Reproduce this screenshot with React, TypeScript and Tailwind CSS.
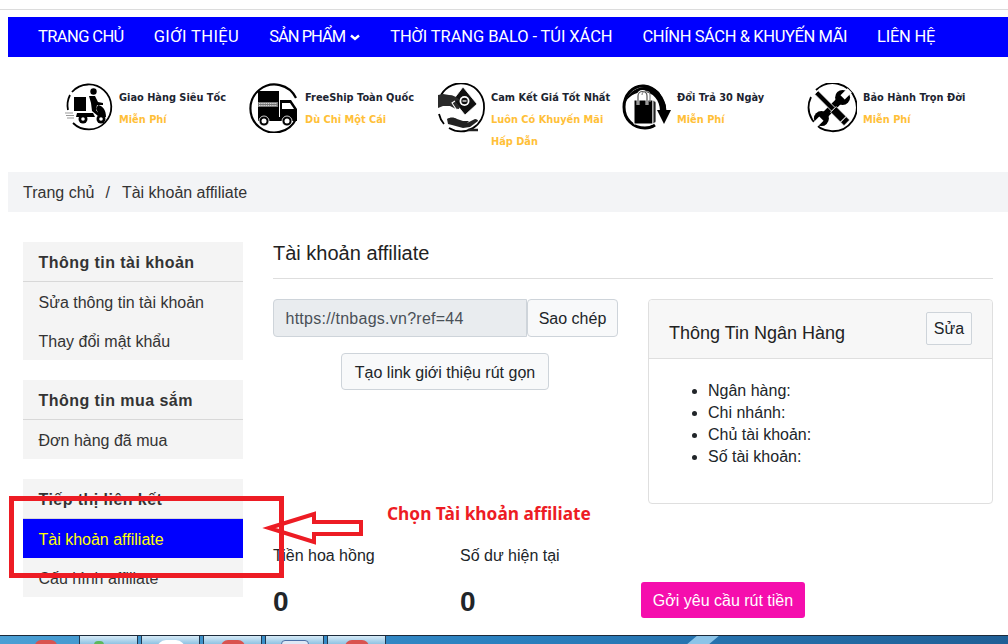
import React from 'react';

const body = '"Liberation Sans", "Noto Sans", sans-serif';

const ScooterIcon = () => (
  <svg viewBox="0 0 48 48" className="w-[48px] h-[48px] shrink-0">
    <path d="M7 9A22.500 22.500 0 1 1 8 40" fill="none" stroke="#000" strokeWidth="1.800" />
    <path d="M5 12A22.500 22.500 0 0 0 3 27" fill="none" stroke="#000" strokeWidth="1.800" />
    <path d="M0 30h8M1 32.500h8M2 35h7" stroke="#999" strokeWidth="1" />
    <rect x="9" y="14" width="12" height="14" fill="#000" />
    <circle cx="28.500" cy="8.500" r="3.200" fill="#000" />
    <path d="M24 13l6 0 3 6 5 1 0 2-6 0-1 5 4 5-2 1-6-5-1-8z" fill="#000" />
    <path d="M33 22c5 1 8 5 8 12l-7 1c0-4-2-8-3-9z" fill="#000" />
    <path d="M12 30h16l2 4H11z" fill="#000" />
    <circle cx="18" cy="36" r="4.500" fill="#000" />
    <circle cx="18" cy="36" r="1.800" fill="#fff" />
    <circle cx="36" cy="36" r="4.500" fill="#000" />
    <circle cx="36" cy="36" r="1.800" fill="#fff" />
  </svg>
);

const TruckIcon = () => (
  <svg viewBox="0 0 50 50" className="w-[50px] h-[50px] shrink-0">
    <path d="M47 15A24 24 0 1 0 47 36" fill="none" stroke="#000" strokeWidth="2.200" />
    <rect x="9" y="8" width="20" height="27" fill="#000" />
    <rect x="29" y="8" width="1" height="27" fill="#000" />
    <rect x="9" y="19" width="20" height="5" fill="#777" />
    <path d="M10 20.500h18M10 22.500h18" stroke="#fff" strokeWidth="0.700" strokeDasharray="1.500 0.700" />
    <path d="M31 17h11l6 9v11H31z" fill="#000" />
    <path d="M33 20h8l4 6H33z" fill="#fff" />
    <rect x="9" y="34" width="39" height="4" fill="#000" />
    <circle cx="15" cy="38" r="5" fill="#000" stroke="#fff" strokeWidth="0.800" />
    <circle cx="15" cy="38" r="2.500" fill="#fff" />
    <circle cx="38" cy="38" r="5" fill="#000" stroke="#fff" strokeWidth="0.800" />
    <circle cx="38" cy="38" r="2.500" fill="#fff" />
  </svg>
);

const MoneyIcon = () => (
  <svg viewBox="0 0 50 50" className="w-[50px] h-[50px] shrink-0">
    <path d="M6 12A23 23 0 0 1 49 24A23 23 0 0 1 14 45M4 31A23 23 0 0 0 9 41" fill="none" stroke="#000" strokeWidth="1.800" />
    <path d="M28 4L42 21 30 32 18 17z" fill="#111" stroke="#fff" strokeWidth="0.800" />
    <circle cx="29.500" cy="18" r="5" fill="#fff" />
    <circle cx="29.500" cy="18" r="3.200" fill="#111" />
    <path d="M27.500 18h4" stroke="#fff" strokeWidth="1.200" />
    <path d="M3 12L8 11l6 1c4 0 8 2 11 5l-5 1 5 6-2 3-8-4H8l-5 2z" fill="#2a2a2a" />
    <path d="M20 18l-3 2 4 6 4 1" fill="none" stroke="#fff" strokeWidth="1.100" />
    <path d="M12 36c3-2 7-2 10 0l6 2h6l-2 2 8-4c2 0 3 1 3 2l-8 6-7 1-11-3-4-1z" fill="#222" />
    <path d="M33 47h10" stroke="#222" strokeWidth="2.500" />
  </svg>
);

const BagIcon = () => (
  <svg viewBox="0 0 50 48" className="w-[50px] h-[48px] shrink-0">
    <path d="M43 28C42 14 33 4 22 3 10 2 2 13 2 24c0 12 9 21 21 21 4 0 7-1 10-3" fill="none" stroke="#000" strokeWidth="3" />
    <path d="M3 20A21 21 0 0 1 37 9l6 11c1 2 1 5 1 8h-6C38 17 31 9 21 9 13 9 6 14 3 20z" fill="#000" />
    <path d="M35 27h14l-7 14z" fill="#000" />
    <path d="M12 17h19v24H12z" fill="#000" stroke="#fff" strokeWidth="1" />
    <path d="M31 17l3 2v20l-3 2z" fill="#222" stroke="#fff" strokeWidth="0.800" />
    <path d="M16 22V13c0-6 9-6 9 0v9" fill="none" stroke="#fff" strokeWidth="2.800" />
    <path d="M16 22V13c0-6 9-6 9 0v9" fill="none" stroke="#555" strokeWidth="1.200" />
    <path d="M20 12c0-5 8-5 8 0v7" fill="none" stroke="#888" strokeWidth="1.200" />
  </svg>
);

const ToolsIcon = () => (
  <svg viewBox="0 0 50 50" className="w-[50px] h-[50px] shrink-0">
    <path d="M9 7A24 24 0 1 1 4 14" fill="none" stroke="#000" strokeWidth="1.800" />
    <g transform="rotate(45 25 25)">
      <rect x="21.500" y="11" width="7" height="28" fill="#000" />
      <circle cx="25" cy="10" r="7.500" fill="#000" />
      <rect x="22" y="0" width="6" height="10" fill="#fff" />
      <circle cx="25" cy="40" r="7.500" fill="#000" />
      <rect x="22" y="40" width="6" height="10" fill="#fff" />
    </g>
    <g transform="rotate(-45 25 25)">
      <rect x="22.500" y="3" width="5" height="24" fill="#000" stroke="#fff" strokeWidth="0.800" />
      <rect x="21" y="27" width="8" height="19" fill="#000" stroke="#fff" strokeWidth="0.800" />
      <path d="M21 41h8" stroke="#fff" strokeWidth="1" />
    </g>
  </svg>
);

const benefits = [
  { icon: <ScooterIcon />, title: 'Giao Hàng Siêu Tốc', sub: ['Miễn Phí'], ml: 'ml-[1px]' },
  { icon: <TruckIcon />, title: 'FreeShip Toàn Quốc', sub: ['Dù Chỉ Một Cái'], ml: '-ml-[1px]' },
  { icon: <MoneyIcon />, title: 'Cam Kết Giá Tốt Nhất', sub: ['Luôn Có Khuyến Mãi', 'Hấp Dẫn'], ml: '-ml-[1px]' },
  { icon: <BagIcon />, title: 'Đổi Trả 30 Ngày', sub: ['Miễn Phí'], ml: 'ml-0' },
  { icon: <ToolsIcon />, title: 'Bảo Hành Trọn Đời', sub: ['Miễn Phí'], ml: '-ml-[1px]' },
];

const navItems = [
  { label: 'TRANG CHỦ', track: 'tracking-[-0.6px]' },
  { label: 'GIỚI THIỆU', track: 'tracking-[0.4px]' },
  { label: 'SẢN PHẨM', track: 'tracking-[-1px]' },
  { label: 'THỜI TRANG BALO - TÚI XÁCH', track: 'tracking-[-0.1px]' },
  { label: 'CHÍNH SÁCH & KHUYẾN MÃI', track: 'tracking-[-0.4px]' },
  { label: 'LIÊN HỆ', track: 'tracking-[-0.25px]' },
];

const sideGroups = [
  { title: 'Thông tin tài khoản', items: ['Sửa thông tin tài khoản', 'Thay đổi mật khẩu'] },
  { title: 'Thông tin mua sắm', items: ['Đơn hàng đã mua'] },
  { title: 'Tiếp thị liên kết', items: ['Tài khoản affiliate', 'Cấu hình affiliate'] },
];

const taskButtons = [
  <div className="w-[10px] h-[4px] bg-[#5cb85c] rounded-t-full mx-auto mt-[5px] -translate-x-[10px]" />,
  <div className="w-[28px] h-[9px] bg-white rounded-t-full mx-auto mt-[4px]" />,
  <div className="w-[24px] h-[7px] bg-[#d9534f] rounded-t-full mx-auto mt-[4px]" />,
  <div className="w-[28px] h-[8px] bg-[#dfe8f5] border border-[#4a6fa5] rounded-t-sm mx-auto mt-[4px]" />,
  <div className="w-[24px] h-[7px] bg-[#d9534f] rounded-t-full mx-auto mt-[4px]" />,
];

export default function App() {
  return (
    <div className="relative w-[1008px] h-[644px] overflow-hidden bg-white flex flex-col text-[#212529]" style={{ fontFamily: body }}>
      <div className="h-[10px] shrink-0 border-b border-[#dcdcdc]" />

      <div className="ml-[8px] mt-[7px] h-[40px] shrink-0 bg-[#0000ff] flex items-center pl-[15px] text-white text-[16.500px]" style={{ fontFamily: 'Roboto, sans-serif' }}>
        {navItems.map((item) => (
          <a key={item.label} className={`px-[15px] whitespace-nowrap flex items-center gap-[5px] ${item.track}`}>
            {item.label}
            {item.label === 'SẢN PHẨM' && (
              <svg viewBox="0 0 10 7" className="w-[10px] h-[7px]">
                <path d="M1 1.500l4 3.500 4-3.500" fill="none" stroke="#fff" strokeWidth="2.400" />
              </svg>
            )}
          </a>
        ))}
      </div>

      <div className="mt-[26px] h-[89px] shrink-0 flex pl-[64px]">
        {benefits.map((b) => (
          <div key={b.title} className="w-[186px] flex">
            <div className="w-[55px] shrink-0">
              <div className={b.ml}>{b.icon}</div>
            </div>
            <div className="text-[9.800px] font-bold leading-[22px] pt-[4px] whitespace-nowrap" style={{ fontFamily: '"DejaVu Sans", sans-serif' }}>
              <div className="text-[#1c2430]">{b.title}</div>
              {b.sub.map((s) => (
                <div key={s} className="text-[#ffc038]">{s}</div>
              ))}
            </div>
          </div>
        ))}
      </div>

      <div className="ml-[8px] h-[40px] shrink-0 bg-[#f3f4f6] flex items-center pl-[15px] pt-[1px] text-[16px] text-[#333]">
        <span>Trang chủ</span>
        <span className="px-[10px] ml-[1px] mr-[2px]">/</span>
        <span>Tài khoản affiliate</span>
      </div>

      <div className="flex-1 min-h-0 flex pl-[23px] pr-[15px] pt-[30px]">
        <aside className="w-[220px] shrink-0 flex flex-col gap-[20px]">
          {sideGroups.map((g) => (
            <div key={g.title} className="bg-[#f4f4f4] text-[16px] text-[#333]">
              <div className="h-[40px] flex items-center pl-[15.500px] pt-[2px] font-bold tracking-[0.45px] border-b border-[#d8d8d8]">{g.title}</div>
              {g.items.map((it) => (
                <div
                  key={it}
                  className={
                    it === 'Tài khoản affiliate'
                      ? 'h-[39px] flex items-center pl-[15.500px] pt-[2px] bg-[#0000ff] text-[#ffff00]'
                      : 'h-[39px] flex items-center pl-[15.500px] pt-[2px]'
                  }
                >
                  {it}
                </div>
              ))}
            </div>
          ))}
        </aside>

        <main className="flex-1 ml-[30px]">
          <h1 className="text-[20px] leading-[22px] pb-[14px] border-b border-[#dedede] text-[#222]">Tài khoản affiliate</h1>

          <div className="mt-[20px] flex justify-between">
            <div className="w-[345px]">
              <div className="flex">
                <div className="w-[254px] h-[38px] bg-[#e9ecef] border border-[#ced4da] rounded-l-[4px] flex items-center px-[11.500px] pt-[1px] tracking-[0.25px] text-[#495057] text-[16px]">
                  https://tnbags.vn?ref=44
                </div>
                <button className="w-[91px] h-[38px] pt-[2px] bg-[#f8f9fa] border border-[#ced4da] rounded-[4px] text-[16px] text-[#212529]">Sao chép</button>
              </div>
              <div className="mt-[16px] ml-[68px]">
                <button className="w-[208px] h-[37px] pt-[2px] bg-[#f8f9fa] border border-[#ced4da] rounded-[4px] text-[16px] text-[#212529]">Tạo link giới thiệu rút gọn</button>
              </div>
            </div>

            <section className="w-[345px] h-[205px] border border-[#dfdfdf] rounded-[4px]">
              <div className="h-[59px] bg-[#f7f7f7] border-b border-[#dfdfdf] rounded-t-[4px] flex items-center justify-between px-[20px]">
                <span className="text-[18px] text-[#222] mt-[8px]">Thông Tin Ngân Hàng</span>
                <button className="w-[46px] h-[33px] bg-[#f8f9fa] border border-[#ced4da] rounded-[2px] text-[16px] mb-[1px]">Sửa</button>
              </div>
              <ul className="list-disc pl-[59px] pt-[21px] text-[16px] leading-[22px]">
                <li>Ngân hàng:</li>
                <li>Chi nhánh:</li>
                <li>Chủ tài khoản:</li>
                <li>Số tài khoản:</li>
              </ul>
            </section>
          </div>

          <div className="mt-[41px] flex">
            <div className="w-[187px]">
              <div className="text-[16px] leading-[22px]">Tiền hoa hồng</div>
              <div className="mt-[20px] text-[28px] leading-[30px] font-bold">0</div>
            </div>
            <div className="w-[181px]">
              <div className="text-[16px] leading-[22px]">Số dư hiện tại</div>
              <div className="mt-[20px] text-[28px] leading-[30px] font-bold">0</div>
            </div>
            <button className="mt-[37px] w-[164px] h-[36px] pt-[2px] bg-[#f50ead] rounded-[3px] text-white text-[16px]">Gởi yêu cầu rút tiền</button>
          </div>
        </main>
      </div>

      <div className="absolute left-0 right-0 bottom-0 h-[9px] border-t border-[#1c2a3a] bg-gradient-to-r from-[#4a9fd4] via-[#2a80bf] to-[#1f5f96] flex pl-[79px] gap-[3px]">
        <div className="absolute left-[35px] top-[4px] w-[22px] h-[6px] bg-[#d9534f] rounded-t-full" />
        <div className="absolute left-[692px] top-0 w-[22px] h-full bg-[#8cc4e8] -skew-x-[50deg]" />
        {taskButtons.map((glyph, i) => (
          <div key={i} className="w-[59px] h-full bg-gradient-to-b from-[#d6eaf6] to-[#8fc3e3] border-x border-[#22384f] overflow-hidden">
            {glyph}
          </div>
        ))}
      </div>

      {/* red annotation drawn over the page */}
      <div className="absolute left-[9px] top-[496px] w-[275px] h-[82px] border-[5px] border-[#ed1c24]" />
      <svg className="absolute left-[260px] top-[505px] w-[110px] h-[44px]" viewBox="0 0 110 44">
        <path d="M9 23L54 9v8h47v12H54v8z" fill="none" stroke="#ed1c24" strokeWidth="4" />
      </svg>
      <div className="absolute left-[387px] top-[503px] text-[17.300px] leading-[22px] font-bold text-[#ed1c24] whitespace-nowrap" style={{ fontFamily: '"Noto Sans", sans-serif' }}>
        Chọn Tài khoản affiliate
      </div>
    </div>
  );
}
